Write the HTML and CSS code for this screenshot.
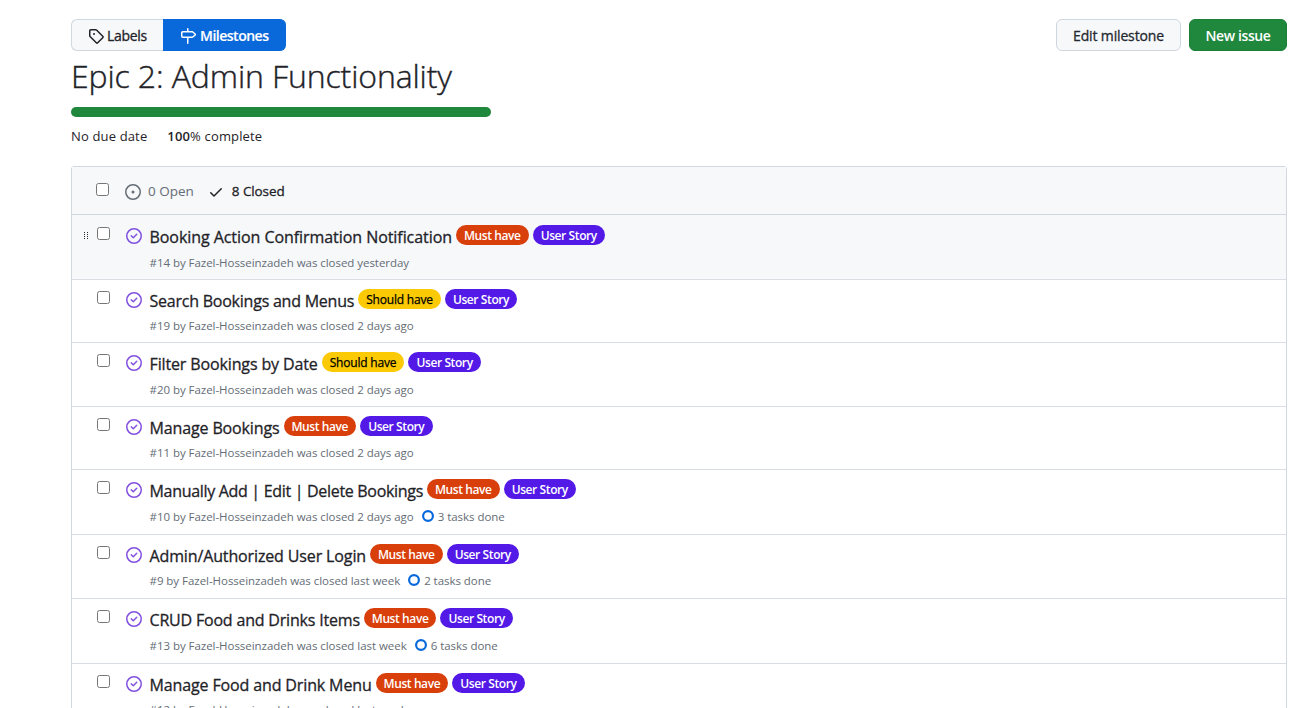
FILE: index.html
```html
<!DOCTYPE html>
<html lang="en">
<head>
<meta charset="utf-8">
<title>Epic 2: Admin Functionality</title>
<link rel="stylesheet" href="styles.css">
</head>
<body>
<svg class="sprite" width="0" height="0">
  <symbol id="done" viewBox="0 0 16 16"><path d="M11.28 6.78a.75.75 0 0 0-1.06-1.06L7.25 8.69 5.78 7.22a.75.75 0 0 0-1.06 1.06l2 2a.75.75 0 0 0 1.06 0l3.5-3.5Z"/><path d="M16 8A8 8 0 1 1 0 8a8 8 0 0 1 16 0Zm-1.5 0a6.5 6.5 0 1 0-13 0 6.500 6.500 0 0 0 13 0Z"/></symbol>
  <symbol id="ring" viewBox="0 0 12 12"><circle cx="6" cy="6" r="4.900" fill="none" stroke="currentColor" stroke-width="2.200"/></symbol>
</svg>
<main class="page">
  <header class="toolbar">
    <nav class="tabs">
      <a class="tab"><svg class="icon" viewBox="0 0 16 16"><path d="M1 7.775V2.750C1 1.784 1.784 1 2.750 1h5.025c.464 0 .91.184 1.238.513l6.250 6.250a1.750 1.750 0 0 1 0 2.474l-5.026 5.026a1.750 1.750 0 0 1-2.474 0l-6.250-6.250A1.752 1.752 0 0 1 1 7.775Zm1.500 0c0 .066.026.13.073.177l6.250 6.250a.25.25 0 0 0 .354 0l5.025-5.025a.25.25 0 0 0 0-.354l-6.250-6.250a.25.25 0 0 0-.177-.073H2.750a.25.25 0 0 0-.25.25ZM6 5a1 1 0 1 1 0 2 1 1 0 0 1 0-2Z"/></svg><span class="t-labels">Labels</span></a>
      <a class="tab tab-active"><svg class="icon" viewBox="0 0 16 16"><path d="M7.750 0a.75.75 0 0 1 .75.75V3h3.634c.414 0 .814.147 1.130.414l2.070 1.750a1.750 1.750 0 0 1 0 2.672l-2.070 1.750a1.750 1.750 0 0 1-1.130.414H8.500v5.250a.75.75 0 0 1-1.500 0V10H2.750A1.750 1.750 0 0 1 1 8.250v-3.500C1 3.784 1.784 3 2.750 3H7V.75A.75.75 0 0 1 7.750 0Zm4.384 8.500a.25.25 0 0 0 .161-.06l2.070-1.750a.248.248 0 0 0 0-.38l-2.070-1.750a.25.25 0 0 0-.161-.06H2.750a.25.25 0 0 0-.25.25v3.500c0 .138.112.25.25.25h9.384Z"/></svg><span class="t-miles">Milestones</span></a>
    </nav>
    <div class="actions">
      <button class="btn btn-edit"><span>Edit milestone</span></button>
      <button class="btn btn-new"><span>New issue</span></button>
    </div>
  </header>
  <h1 class="heading"><span>Epic 2: Admin Functionality</span></h1>
  <div class="progress"></div>
  <div class="stats"><span class="due">No due date</span><span class="pct"><b>100</b>% complete</span></div>
  <section class="list">
    <div class="list-head">
      <span class="check"></span>
      <span class="open"><svg class="icon" viewBox="0 0 16 16"><path d="M8 9.500a1.500 1.500 0 1 0 0-3 1.500 1.500 0 0 0 0 3Z"/><path d="M8 0a8 8 0 1 1 0 16A8 8 0 0 1 8 0ZM1.500 8a6.500 6.500 0 1 0 13 0 6.500 6.500 0 0 0-13 0Z"/></svg><span>0 Open</span></span>
      <span class="closed"><svg class="icon" viewBox="0 0 16 16"><path d="M13.780 4.220a.75.75 0 0 1 0 1.060l-7.250 7.250a.75.75 0 0 1-1.060 0L2.220 9.280a.751.751 0 0 1 .018-1.042.751.751 0 0 1 1.042-.018L6 10.940l6.720-6.720a.75.75 0 0 1 1.060 0Z"/></svg><span>8 Closed</span></span>
    </div>
    <article class="row row-hover">
      <span class="grip"><i></i><i></i><i></i><i></i><i></i><i></i><i></i><i></i></span><span class="check"></span><svg class="icon done"><use href="#done"/></svg>
      <div class="body"><div class="line"><a class="title snug-1">Booking Action Confirmation Notification</a><span class="chip must"><span>Must have</span></span><span class="chip story"><span>User Story</span></span></div>
      <div class="meta"><span>#14 by Fazel-Hosseinzadeh was closed yesterday</span></div></div>
    </article>
    <article class="row">
      <span class="check"></span><svg class="icon done"><use href="#done"/></svg>
      <div class="body"><div class="line"><a class="title snug-3">Search Bookings and Menus</a><span class="chip should"><span>Should have</span></span><span class="chip story"><span>User Story</span></span></div>
      <div class="meta"><span>#19 by Fazel-Hosseinzadeh was closed 2 days ago</span></div></div>
    </article>
    <article class="row">
      <span class="check"></span><svg class="icon done"><use href="#done"/></svg>
      <div class="body"><div class="line"><a class="title">Filter Bookings by Date</a><span class="chip should"><span>Should have</span></span><span class="chip story"><span>User Story</span></span></div>
      <div class="meta"><span>#20 by Fazel-Hosseinzadeh was closed 2 days ago</span></div></div>
    </article>
    <article class="row">
      <span class="check"></span><svg class="icon done"><use href="#done"/></svg>
      <div class="body"><div class="line"><a class="title">Manage Bookings</a><span class="chip must"><span>Must have</span></span><span class="chip story"><span>User Story</span></span></div>
      <div class="meta"><span>#11 by Fazel-Hosseinzadeh was closed 2 days ago</span></div></div>
    </article>
    <article class="row row-tasks">
      <span class="check"></span><svg class="icon done"><use href="#done"/></svg>
      <div class="body"><div class="line"><a class="title snug-4">Manually Add | Edit | Delete Bookings</a><span class="chip must"><span>Must have</span></span><span class="chip story"><span>User Story</span></span></div>
      <div class="meta"><span>#10 by Fazel-Hosseinzadeh was closed 2 days ago</span><svg class="ring"><use href="#ring"/></svg><span>3 tasks done</span></div></div>
    </article>
    <article class="row row-tasks">
      <span class="check"></span><svg class="icon done"><use href="#done"/></svg>
      <div class="body"><div class="line"><a class="title">Admin/Authorized User Login</a><span class="chip must"><span>Must have</span></span><span class="chip story"><span>User Story</span></span></div>
      <div class="meta"><span>#9 by Fazel-Hosseinzadeh was closed last week</span><svg class="ring"><use href="#ring"/></svg><span>2 tasks done</span></div></div>
    </article>
    <article class="row row-tasks">
      <span class="check"></span><svg class="icon done"><use href="#done"/></svg>
      <div class="body"><div class="line"><a class="title snug-2">CRUD Food and Drinks Items</a><span class="chip must"><span>Must have</span></span><span class="chip story"><span>User Story</span></span></div>
      <div class="meta"><span>#13 by Fazel-Hosseinzadeh was closed last week</span><svg class="ring"><use href="#ring"/></svg><span>6 tasks done</span></div></div>
    </article>
    <article class="row">
      <span class="check"></span><svg class="icon done"><use href="#done"/></svg>
      <div class="body"><div class="line"><a class="title">Manage Food and Drink Menu</a><span class="chip must"><span>Must have</span></span><span class="chip story"><span>User Story</span></span></div>
      <div class="meta"><span>#12 by Fazel-Hosseinzadeh was closed last week</span></div></div>
    </article>
  </section>
</main>
</body>
</html>
```
FILE: styles.css
```css
* { box-sizing: border-box; }
body { margin: 0; background: #fff; color: #1f2328; font: 14px/20px "Open Sans", "Noto Sans", sans-serif; overflow: hidden; }
.sprite { display: block; height: 0; }
.page { height: 708px; overflow: hidden; padding: 19px 19px 0 71px; }
.icon { width: 16px; height: 16px; fill: currentColor; flex: none; display: block; }
.toolbar { display: flex; justify-content: space-between; height: 32px; }
.tabs { display: flex; }
.tab { display: flex; align-items: center; gap: 3px; width: 92px; height: 32px; padding: 1px 0 0 16px; border: 1px solid #d0d7de; border-right: 0; border-radius: 6px 0 0 6px; background: #f6f8fa; white-space: nowrap; }
.tab-active { gap: 4px; width: 123px; border-color: #0969da; border-radius: 0 6px 6px 0; background: #0969da; color: #fff; font-weight: 600; }
.t-labels { letter-spacing: -0.3px; -webkit-text-stroke: 0.3px; }
.t-miles { letter-spacing: -0.5px; -webkit-text-stroke: 0.15px; }
.actions { display: flex; gap: 8px; }
.btn { height: 32px; border-radius: 6px; border: 1px solid #d0d7de; background: #f6f8fa; color: #24292f; font: 400 14px/20px "Open Sans", sans-serif; padding: 1px 0 0; white-space: nowrap; -webkit-text-stroke: 0.3px; }
.btn-edit { width: 125px; letter-spacing: -0.15px; }
.btn-new { width: 98px; background: #1f883d; border-color: #1a7f37; color: #fff; font-weight: 600; letter-spacing: -0.4px; -webkit-text-stroke: 0; }
.heading { margin: 5px 0 0; height: 40px; font-size: 32px; line-height: 40px; font-weight: 300; letter-spacing: -0.12px; white-space: nowrap; -webkit-text-stroke: 0.4px; }
.progress { width: 420px; height: 10px; margin-top: 11px; border-radius: 5px; background: #1f883d; }
.stats { display: flex; gap: 20px; margin-top: 9px; height: 20px; font-size: 13px; letter-spacing: 0.15px; }
.stats b { font-weight: 600; }
.list { margin-top: 20px; border: 1px solid #d0d7de; border-radius: 3px 3px 0 0; height: 560px; }
.list-head { display: flex; height: 48.400px; padding: 0 0 0 24px; background: #f6f8fa; border-bottom: 1px solid #d0d7de; }
.check { width: 13px; height: 13px; border: 1px solid #767676; border-radius: 2.500px; background: #fff; flex: none; }
.list-head .check { margin-top: 16px; }
.open, .closed { display: flex; align-items: center; height: 20px; margin-top: 14px; gap: 7px; white-space: nowrap; font-size: 13.500px; }
.open { margin-left: 16px; color: #656d76; }
.closed { margin-left: 14px; gap: 8px; letter-spacing: -0.1px; -webkit-text-stroke: 0.3px; }
.list-head .icon { margin-top: 2px; }
.row { position: relative; display: flex; height: 63.500px; padding: 11px 0 0 25px; border-bottom: 1px solid #d8dee4; }
.row-tasks { height: 64.500px; }
.row-hover { height: 64.500px; padding-top: 12px; background: #f6f8fa; }
.done { color: #8250df; margin: 1px 0 0 16px; }
.body { margin-left: 7.500px; }
.line { display: flex; gap: 4px; height: 24px; white-space: nowrap; }
.title { font-size: 16px; line-height: 20px; letter-spacing: -0.13px; -webkit-text-stroke: 0.3px; }
.snug-1 { letter-spacing: -0.06px; }
.snug-2 { letter-spacing: -0.19px; }
.snug-3 { letter-spacing: -0.23px; }
.snug-4 { letter-spacing: -0.31px; }
.chip { display: flex; justify-content: center; width: 72.500px; height: 20px; margin-top: -2px; border-radius: 10px; color: #fff; font-size: 12px; line-height: 21px; font-weight: 600; letter-spacing: -0.4px; }
.must { background: #d93f0b; }
.story { background: #5319e7; }
.should { width: 82.600px; background: #fbca04; color: #000; font-weight: 400; letter-spacing: -0.2px; -webkit-text-stroke: 0.25px; }
.meta { display: flex; height: 20px; color: #656d76; font-size: 11.500px; line-height: 20px; letter-spacing: -0.04px; white-space: nowrap; margin-top: 1.600px; }
.ring { width: 12px; height: 12px; margin: 3px 4px 0 8px; color: #0969da; }
.grip { position: absolute; left: 12px; top: 17px; display: grid; grid-template-columns: 1px 1px; gap: 1px 2px; }
.grip i { width: 1px; height: 1px; background: #24292f; }
```
